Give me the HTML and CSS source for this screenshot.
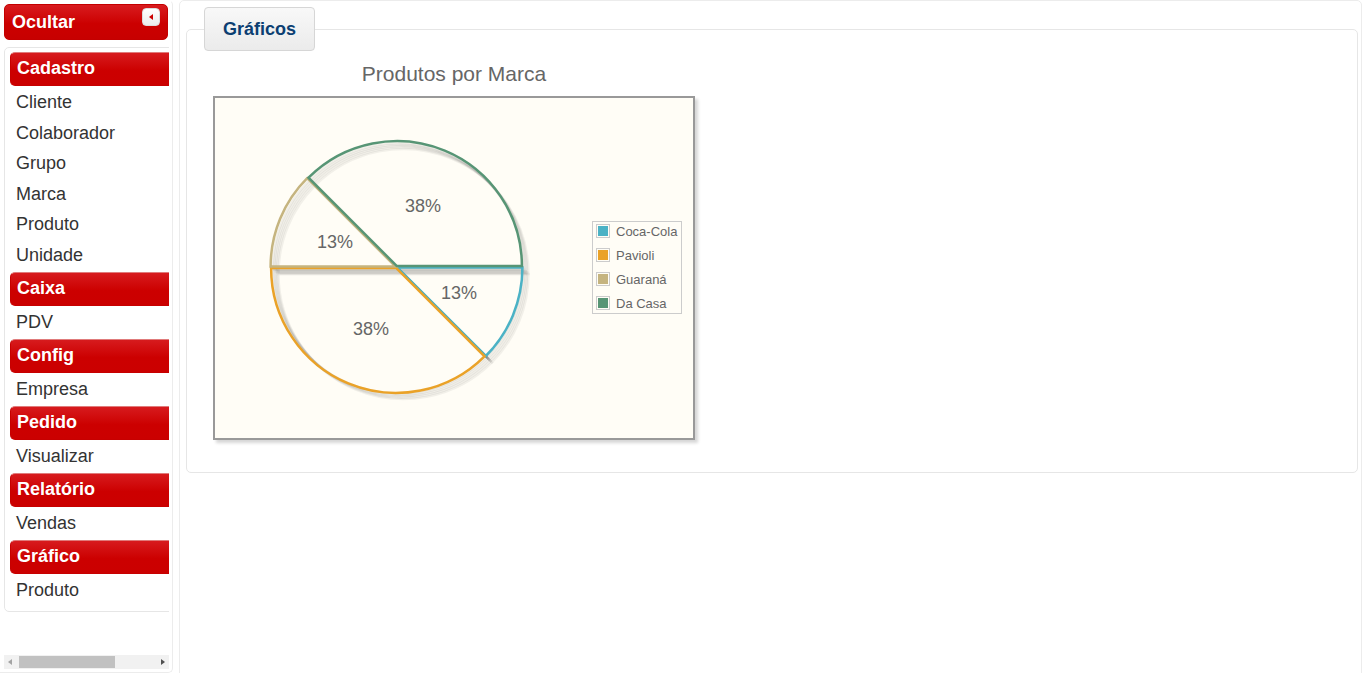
FILE: index.html
```html
<!DOCTYPE html>
<html lang="pt-BR">
<head>
<meta charset="utf-8">
<title>Gráficos</title>
<link rel="stylesheet" href="styles.css">
</head>
<body>
<div class="page">
  <aside class="west">
    <div class="west-header">
      <span class="west-title">Ocultar</span>
      <span class="toggle"><span class="tri-left"></span></span>
    </div>
    <div class="west-body">
      <div class="west-scroll">
        <div class="menu">
          <div class="group">
            <div class="group-head">Cadastro</div>
            <div class="item">Cliente</div>
            <div class="item">Colaborador</div>
            <div class="item">Grupo</div>
            <div class="item">Marca</div>
            <div class="item">Produto</div>
            <div class="item">Unidade</div>
          </div>
          <div class="group">
            <div class="group-head">Caixa</div>
            <div class="item">PDV</div>
          </div>
          <div class="group">
            <div class="group-head">Config</div>
            <div class="item">Empresa</div>
          </div>
          <div class="group">
            <div class="group-head">Pedido</div>
            <div class="item">Visualizar</div>
          </div>
          <div class="group">
            <div class="group-head">Relatório</div>
            <div class="item">Vendas</div>
          </div>
          <div class="group">
            <div class="group-head">Gráfico</div>
            <div class="item">Produto</div>
          </div>
        </div>
      </div>
      <div class="hscroll">
        <span class="arrow-left"></span>
        <span class="thumb"></span>
        <span class="arrow-right"></span>
      </div>
    </div>
  </aside>

  <main class="center">
    <fieldset class="panel">
      <legend class="panel-legend">Gráficos</legend>
      <div class="chart">
        <div class="chart-title">Produtos por Marca</div>
        <div class="plot">
          <svg class="pie" width="478" height="340" viewBox="0 0 478 340">
            <defs>
              <g id="pie">
                <path id="s1" d="M181.5 169 L306.5 169 A125 125 0 0 1 269.9 257.4 Z"/>
                <path id="s2" d="M181.5 169 L269.9 257.4 A125 125 0 0 1 56.5 169 Z"/>
                <path id="s3" d="M181.5 169 L56.5 169 A125 125 0 0 1 93.1 80.6 Z"/>
                <path id="s4" d="M181.5 169 L93.1 80.6 A125 125 0 0 1 306.5 169 Z"/>
              </g>
            </defs>
            <g fill="none" stroke-width="2.5" stroke-linejoin="miter">
              <use href="#pie" stroke="rgba(0,0,0,0.06)" transform="translate(1.4 1.4)"/>
              <use href="#pie" stroke="rgba(0,0,0,0.06)" transform="translate(2.8 2.8)"/>
              <use href="#pie" stroke="rgba(0,0,0,0.06)" transform="translate(4.2 4.2)"/>
              <use href="#pie" stroke="rgba(0,0,0,0.06)" transform="translate(5.6 5.6)"/>
              <use href="#pie" stroke="rgba(0,0,0,0.05)" transform="translate(7 7)"/>
              <use href="#s1" stroke="#4bb2c5" transform="translate(0.9 0.6)"/>
              <use href="#s2" stroke="#eaa228" transform="translate(-0.4 0.9)"/>
              <use href="#s3" stroke="#c5b47f" transform="translate(-0.9 -0.4)"/>
              <use href="#s4" stroke="#579575" transform="translate(0.4 -0.9)"/>
            </g>
            <g class="pct" text-anchor="middle" dominant-baseline="central">
              <text x="208" y="108">38%</text>
              <text x="120" y="144">13%</text>
              <text x="244" y="195">13%</text>
              <text x="156" y="231">38%</text>
            </g>
          </svg>
          <div class="legend">
            <div class="legend-row"><span class="swatch"><span class="swatch-fill c1"></span></span><span class="legend-label">Coca-Cola</span></div>
            <div class="legend-row"><span class="swatch"><span class="swatch-fill c2"></span></span><span class="legend-label">Pavioli</span></div>
            <div class="legend-row"><span class="swatch"><span class="swatch-fill c3"></span></span><span class="legend-label">Guaraná</span></div>
            <div class="legend-row"><span class="swatch"><span class="swatch-fill c4"></span></span><span class="legend-label">Da Casa</span></div>
          </div>
        </div>
      </div>
    </fieldset>
  </main>
</div>
</body>
</html>
```

FILE: styles.css
```css
* { box-sizing: border-box; }

html, body {
  margin: 0;
  padding: 0;
  background: #ffffff;
  font-family: "Liberation Sans", Arial, sans-serif;
  overflow: hidden;
}

.page {
  display: flex;
  gap: 6px;
  height: 673px;
}

/* ---------- west pane ---------- */
.west {
  width: 173px;
  flex: 0 0 173px;
  height: 673px;
  border: 1px solid #ececec;
  border-left: none;
  border-top-color: transparent;
  border-radius: 0 5px 5px 0;
  padding: 3px 3px 3px 4px;
  display: flex;
  flex-direction: column;
}

.west-header {
  height: 36px;
  margin-right: 1px;
  border: 1px solid #c40000;
  border-radius: 5px;
  background: linear-gradient(#d81c1f, #cc0000 55%, #c70000);
  display: flex;
  align-items: center;
  justify-content: space-between;
  padding: 0 7px 0 7px;
}

.west-title {
  color: #ffffff;
  font-weight: bold;
  font-size: 18px;
}

.toggle {
  width: 18px;
  height: 18px;
  margin-top: -10px;
  border-radius: 4px;
  background: linear-gradient(#ffffff, #ececec);
  border: 1px solid #dcdcdc;
  display: flex;
  align-items: center;
  justify-content: center;
}

.tri-left {
  width: 0;
  height: 0;
  border-top: 3.5px solid transparent;
  border-bottom: 3.5px solid transparent;
  border-right: 4px solid #cc0000;
  margin-left: -1px;
}

.west-body {
  flex: 1;
  margin-top: 7px;
  display: flex;
  flex-direction: column;
  overflow: hidden;
}

.west-scroll {
  flex: 1;
  overflow: hidden;
}

.menu {
  width: 190px;
  border: 1px solid #e6e6e6;
  border-radius: 5px;
  padding: 4px 5px 4px 5px;
}

.group { margin-bottom: 2.5px; }

.group-head {
  height: 34px;
  border: 1px solid #c70000;
  border-top-color: #e07b7b;
  border-radius: 5px;
  background: linear-gradient(#d71b1e, #cc0000 55%, #cb0000);
  color: #ffffff;
  font-weight: bold;
  font-size: 18px;
  line-height: 31px;
  padding-left: 6px;
}

.item {
  height: 30.5px;
  line-height: 32px;
  font-size: 18px;
  color: #333333;
  padding-left: 6px;
}

.hscroll {
  height: 14px;
  background: #f1f1f1;
  display: flex;
  align-items: center;
  position: relative;
  margin-bottom: 0;
}

.arrow-left {
  width: 0;
  height: 0;
  border-top: 3.5px solid transparent;
  border-bottom: 3.5px solid transparent;
  border-right: 4px solid #a3a3a3;
  margin-left: 4px;
}

.thumb {
  height: 12px;
  width: 96px;
  background: #c1c1c1;
  margin-left: 7px;
}

.arrow-right {
  width: 0;
  height: 0;
  border-top: 3.5px solid transparent;
  border-bottom: 3.5px solid transparent;
  border-left: 4px solid #505050;
  margin-left: auto;
  margin-right: 4px;
}

/* ---------- center pane ---------- */
.center {
  width: 1183px;
  flex: 0 0 1183px;
  height: 690px;
  border: 1px solid #ececec;
  border-radius: 5px;
  padding: 6px 3px 6px 6px;
}

.panel {
  margin: 0;
  width: 1172px;
  border: 1px solid #e6e6e6;
  border-radius: 5px;
  padding: 11px 10px 32px 17px;
}

.panel-legend {
  padding: 0 18px;
  height: 44px;
  line-height: 42px;
  border: 1px solid #d6d6d6;
  border-radius: 4px;
  background: linear-gradient(#f8f8f8, #ebebeb);
  color: #0c3f72;
  font-weight: bold;
  font-size: 18px;
}

.chart {
  width: 482px;
  margin-left: 9px;
}

.chart-title {
  text-align: center;
  color: #666666;
  font-size: 21px;
  height: 24px;
  line-height: 24px;
  margin-bottom: 10px;
}

.plot {
  position: relative;
  width: 482px;
  height: 344px;
  border: 2px solid #999999;
  background: #fffdf6;
  box-shadow: 3px 3px 3px rgba(0, 0, 0, 0.16);
}

.pie { display: block; }

.pct text {
  font-family: "Liberation Sans", Arial, sans-serif;
  font-size: 18px;
  fill: #666666;
}

.legend {
  position: absolute;
  left: 377px;
  top: 123px;
  width: 90px;
  border: 1px solid #cccccc;
  background: #fffdf6;
  padding: 0 2px 1px 3px;
  display: flex;
  flex-direction: column;
  gap: 6px;
}

.legend-row {
  height: 18px;
  display: flex;
  align-items: center;
  gap: 6px;
}

.swatch {
  width: 14px;
  height: 14px;
  border: 1px solid #cccccc;
  padding: 1px;
  display: flex;
}

.swatch-fill { flex: 1; }
.c1 { background: #4bb2c5; }
.c2 { background: #eaa228; }
.c3 { background: #c5b47f; }
.c4 { background: #579575; }

.legend-label {
  font-size: 13px;
  color: #666666;
  white-space: nowrap;
}
```
